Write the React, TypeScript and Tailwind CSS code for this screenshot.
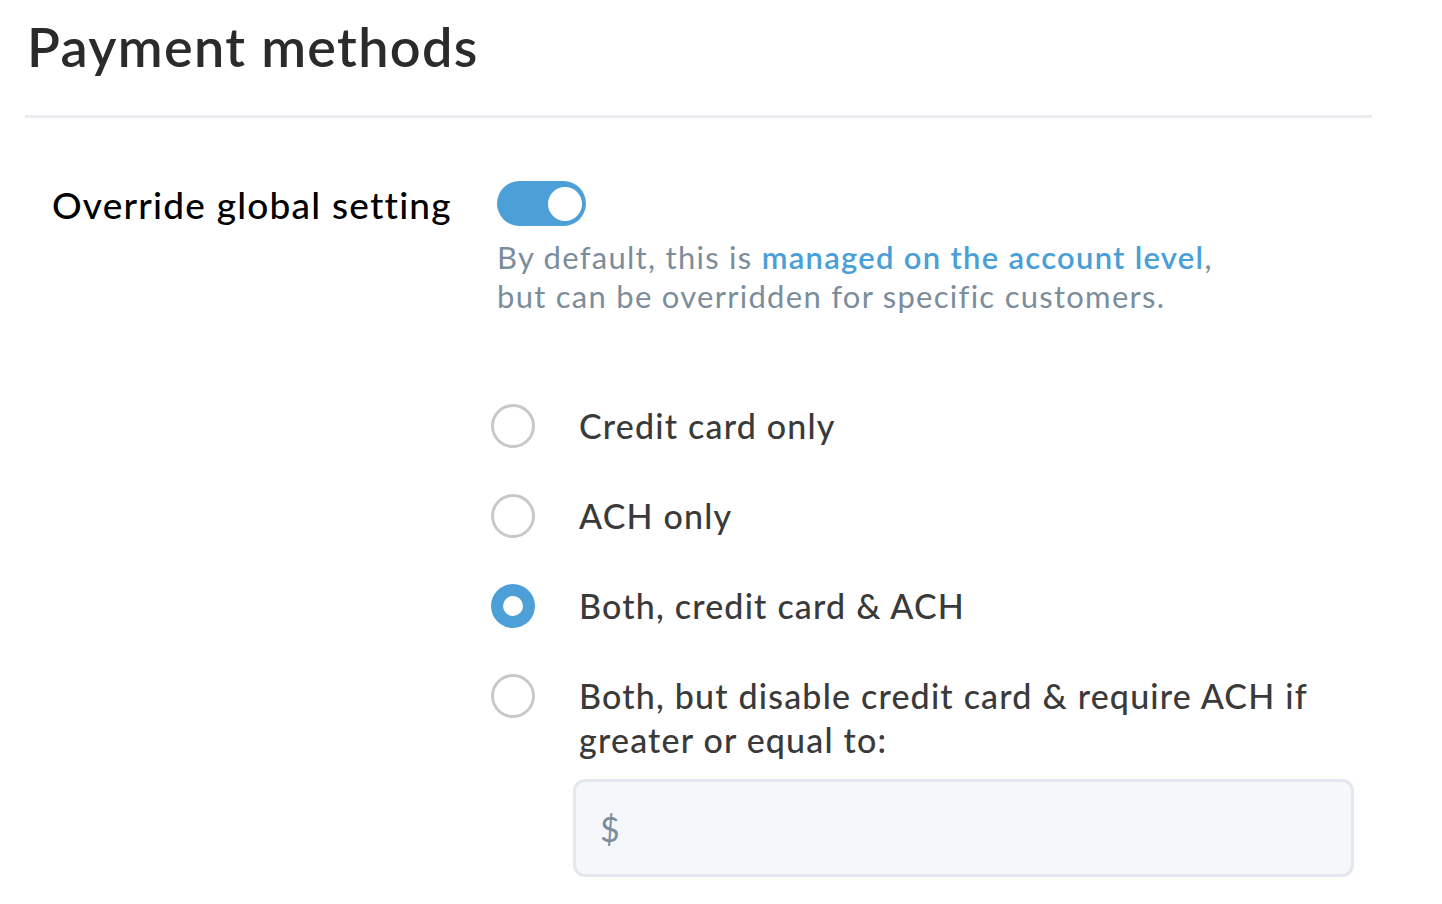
import React, { useState } from 'react';

const options = [
  'Credit card only',
  'ACH only',
  'Both, credit card & ACH',
  'Both, but disable credit card & require ACH if greater or equal to:',
];

const Radio: React.FC<{ checked: boolean }> = ({ checked }) =>
  checked ? (
    <span className="flex h-[44px] w-[44px] shrink-0 items-center justify-center rounded-full bg-[#4d9fd8]">
      <span className="h-[20px] w-[20px] rounded-full bg-white" />
    </span>
  ) : (
    <span className="h-[44px] w-[44px] shrink-0 rounded-full border-[3px] border-[#c8c8c8] bg-white" />
  );

export default function App() {
  const [selected, setSelected] = useState(2);
  const [enabled, setEnabled] = useState(true);

  return (
    <div className="min-h-screen bg-white font-['Lato',sans-serif]">
      <div className="w-[1372px] pl-[25px] pt-[14px]">
        <h1 className="pl-[2px] text-[54px] font-semibold leading-[66px] tracking-[0.025em] text-[#2b2b2b]">
          Payment methods
        </h1>
        <div className="mt-[35px] h-[3px] bg-[#ebecf0]" />

        <div className="mt-[63px] flex">
          {/* Label */}
          <div className="w-[472px] shrink-0 pl-[27px] pt-[2px]">
            <span className="text-[37px] font-medium leading-[44px] tracking-[0.033em] text-black">
              Override global setting
            </span>
          </div>

          {/* Settings */}
          <div className="flex flex-col">
            <button
              onClick={() => setEnabled(!enabled)}
              className="flex h-[45px] w-[89px] items-center justify-end rounded-full bg-[#4d9fd8] pr-[4px]"
            >
              <span className="h-[34px] w-[34px] rounded-full bg-white" />
            </button>
            <p className="mt-[12px] text-[31px] leading-[39px] tracking-[0.041em] text-[#7b8d9c]">
              By default, this is{' '}
              <a href="#" className="font-semibold text-[#4a9fd6]">
                managed on the account level
              </a>
              ,<br />
              but can be overridden for specific customers.
            </p>

            <div className="-ml-[6px] mt-[88px] flex flex-col gap-[46px]">
              {options.map((label, i) => (
                <label key={label} className="flex cursor-pointer items-start gap-[44px]" onClick={() => setSelected(i)}>
                  <Radio checked={selected === i} />
                  <span className="max-w-[780px] text-[34px] font-medium leading-[44px] tracking-[0.035em] text-[#3a3a3a]">
                    {label}
                  </span>
                </label>
              ))}
            </div>

            <div className="ml-[76px] mt-[17px] flex h-[98px] w-[781px] items-center rounded-[12px] border-[3px] border-[#e3e8ee] bg-[#f5f7fa] px-[24px]">
              <span className="text-[34px] text-[#7b8d9c]">$</span>
            </div>
          </div>
        </div>
      </div>
    </div>
  );
}
